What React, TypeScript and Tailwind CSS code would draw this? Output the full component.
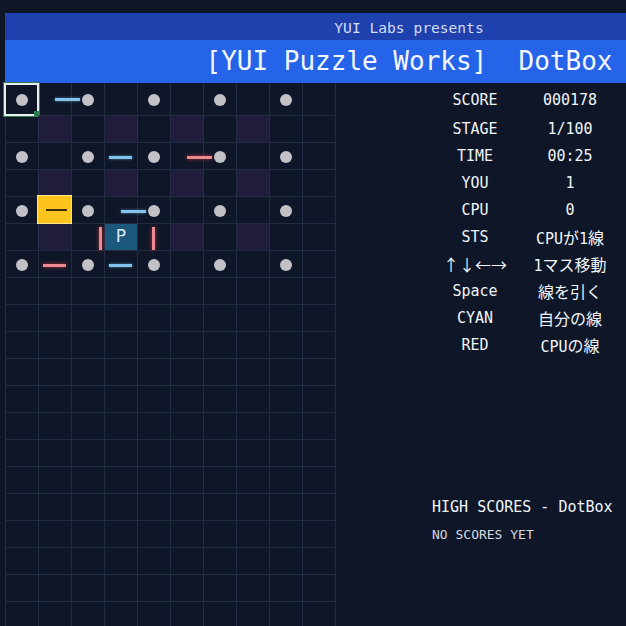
import React from 'react';

const mono = 'font-["DejaVu_Sans_Mono","Noto_Sans_CJK_JP",monospace]';
const cjk = 'font-["Noto_Sans_CJK_JP",sans-serif] text-[16px]';

const DOT_ROWS = [0, 2, 4, 6];
const DOT_COLS = [0, 2, 4, 6, 8];
const SHADED = ['1,1', '3,1', '5,1', '7,1', '1,3', '3,3', '5,3', '7,3', '1,5', '5,5', '7,5'];

// drawn lines and markers, positioned inside their cell
const OVERLAYS: Record<string, React.ReactNode> = {
  '0,0': (
    <>
      <div className="absolute -left-[2px] top-0 w-[35px] h-[33px] border-2 border-[#e8f0ee] ring-1 ring-[#2f7a58]" />
      <div className="absolute left-[28px] top-[28px] w-[6px] h-[6px] bg-[#2f7d52]" />
    </>
  ),
  '1,0': <div className="absolute left-[16px] top-[15px] w-[25px] h-[3px] bg-[#80c4ee] shadow-[0_0_3px_rgba(125,196,238,0.6)]" />,
  '3,2': <div className="absolute left-[4px] top-[13px] w-[23px] h-[3px] bg-[#80c4ee] shadow-[0_0_3px_rgba(125,196,238,0.6)]" />,
  '5,2': <div className="absolute left-[16px] top-[13px] w-[25px] h-[3px] bg-[#ec8a90] shadow-[0_0_4px_rgba(239,68,68,0.7)]" />,
  '1,4': (
    <div className="absolute -left-[2px] -top-[2px] w-[35px] h-[29px] bg-[#fcc41c] border border-[#fde68a]">
      <div className="absolute left-[8px] top-[13px] w-[21px] h-[2px] bg-[#3b2a0c]" />
    </div>
  ),
  '3,4': <div className="absolute left-[16px] top-[13px] w-[25px] h-[3px] bg-[#80c4ee] shadow-[0_0_3px_rgba(125,196,238,0.6)]" />,
  '2,5': <div className="absolute left-[27px] top-[3px] w-[3px] h-[23px] bg-[#ec8a90] shadow-[0_0_4px_rgba(239,68,68,0.7)]" />,
  '3,5': (
    <div className="absolute inset-0 bg-[#1c587c] flex items-center justify-center text-[17px] text-[#dbeafe] font-['DejaVu_Sans',sans-serif]">
      P
    </div>
  ),
  '4,5': <div className="absolute left-[14px] top-[3px] w-[3px] h-[23px] bg-[#ec8a90] shadow-[0_0_4px_rgba(239,68,68,0.7)]" />,
  '1,6': <div className="absolute left-[4px] top-[13px] w-[23px] h-[3px] bg-[#ec8a90] shadow-[0_0_4px_rgba(239,68,68,0.7)]" />,
  '3,6': <div className="absolute left-[4px] top-[13px] w-[23px] h-[3px] bg-[#80c4ee] shadow-[0_0_3px_rgba(125,196,238,0.6)]" />,
};

function Board() {
  const cells = [];
  for (let r = 0; r < 20; r++) {
    for (let c = 0; c < 10; c++) {
      const key = `${c},${r}`;
      const dot = DOT_ROWS.includes(r) && DOT_COLS.includes(c);
      const shaded = SHADED.includes(key);
      cells.push(
        <div
          key={key}
          className={`relative border-r border-b border-[#222d44] flex items-center justify-center ${shaded ? 'bg-[#1f1c3c]' : ''}`}
        >
          {dot && <div className="w-[12px] h-[12px] mt-[2px] rounded-full bg-[#c2c2c6]" />}
          {OVERLAYS[key]}
        </div>
      );
    }
  }
  return (
    <div className="ml-[5px] border-l border-[#222d44] grid grid-cols-[repeat(10,33px)] grid-rows-[33px_repeat(19,27px)] shrink-0">
      {cells}
    </div>
  );
}

const STATS: [React.ReactNode, React.ReactNode][] = [
  ['SCORE', '000178'],
  ['STAGE', '1/100'],
  ['TIME', '00:25'],
  ['YOU', '1'],
  ['CPU', '0'],
  ['STS', <>CPU<span className={cjk}>が</span>1<span className={cjk}>線</span></>],
  [<span className={cjk}>↑↓←→</span>, <>1<span className={cjk}>マス移動</span></>],
  ['Space', <span className={cjk}>線を引く</span>],
  ['CYAN', <span className={cjk}>自分の線</span>],
  ['RED', <>CPU<span className={cjk}>の線</span></>],
];

function SidePanel() {
  return (
    <div className={`flex-1 flex flex-col text-[15px] text-[#f1f5f9] ${mono}`}>
      {STATS.map(([label, value], i) => (
        <div
          key={i}
          className={`pl-[92px] grid grid-cols-[94px_96px] items-center text-center ${i === 0 ? 'h-[33px] pt-[1px]' : 'h-[27px]'}`}
        >
          <div className="whitespace-nowrap">{label}</div>
          <div className="whitespace-nowrap">{value}</div>
        </div>
      ))}
      <div className="h-[135px]" />
      <div className="h-[27px] pl-[96px] flex items-center whitespace-nowrap">HIGH SCORES - DotBox</div>
      <div className="h-[27px] pl-[96px] flex items-center whitespace-nowrap text-[13px] text-[#d4d8e0]">
        NO SCORES YET
      </div>
    </div>
  );
}

export default function App() {
  return (
    <div className={`w-[626px] h-[626px] overflow-hidden bg-[#0e1628] pt-[13px] ${mono}`}>
      <header className="ml-[5px]">
        <div className="h-[27px] bg-[#1f41ad] flex justify-end pr-[13px]">
          <div className="w-[408px] text-center text-[14.6px] leading-[27px] text-[#d6def5] pt-[1px]">
            YUI Labs presents
          </div>
        </div>
        <div className="h-[43px] bg-[#2563e8] flex justify-end pr-[13px]">
          <div className="w-[408px] text-center text-[26px] leading-[43px] text-[#f4f7ff] whitespace-pre">
            [YUI Puzzle Works]  DotBox
          </div>
        </div>
      </header>
      <main className="flex">
        <Board />
        <SidePanel />
      </main>
    </div>
  );
}
